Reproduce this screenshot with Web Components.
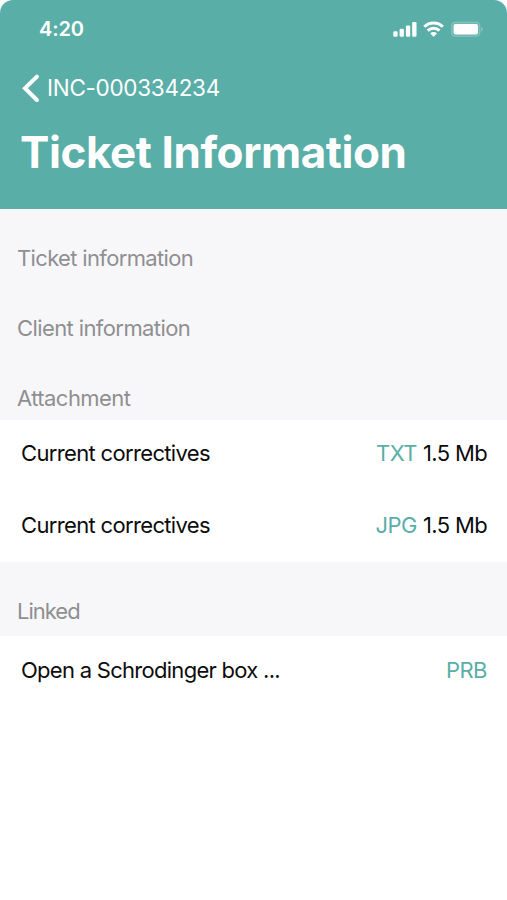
<!DOCTYPE html>
<html lang="en">
<head>
<meta charset="UTF-8">
<meta name="viewport" content="width=device-width, initial-scale=1">
<title>Ticket Information</title>
<style>
  body {
    margin: 0;
    background: #fff;
    font-family: Inter, "Liberation Sans", sans-serif;
  }
</style>
</head>
<body>
<ticket-screen>
  <ticket-header slot="header" time="4:20" back="INC-000334234" heading="Ticket Information"></ticket-header>
  <ticket-section style="--spacing: -0.65px">Ticket information</ticket-section>
  <ticket-section>Client information</ticket-section>
  <ticket-section style="--spacing: -0.55px">Attachment
    <ticket-row slot="rows" tag="TXT" size="1.5 Mb" style="--row-bottom: 5px">Current correctives</ticket-row>
    <ticket-row slot="rows" tag="JPG" size="1.5 Mb">Current correctives</ticket-row>
  </ticket-section>
  <ticket-section style="--head: 74px; --below: 10px; --spacing: -1px">Linked
    <ticket-row slot="rows" tag="PRB" style="--row-spacing: -0.72px">Open a Schrodinger box ...</ticket-row>
  </ticket-section>
</ticket-screen>

<script>
// Phone screen: header on top, sections below
class TicketScreen extends HTMLElement {
  constructor() {
    super();
    this.attachShadow({ mode: 'open' });
  }
  connectedCallback() {
    this.shadowRoot.innerHTML = `
      <style>
        :host {
          display: flex;
          flex-direction: column;
          min-height: 900px;
          background: #fff;
        }
        main { padding-top: 1px; background: #f7f7fa; }
      </style>
      <slot name="header"></slot>
      <main><slot></slot></main>
    `;
  }
}

// Signal, wifi and battery
class StatusIcons extends HTMLElement {
  constructor() {
    super();
    this.attachShadow({ mode: 'open' });
  }
  connectedCallback() {
    this.shadowRoot.innerHTML = `
      <style>
        :host { display: block; height: 18px; }
        svg { display: block; }
      </style>
      <svg width="92" height="18" viewBox="0 0 92 18" fill="#fff">
        <rect x="0.3" y="11.2" width="4.3" height="5.5" rx="1.3"/>
        <rect x="6.6" y="8.7" width="4.3" height="8" rx="1.3"/>
        <rect x="12.9" y="5.5" width="4.3" height="11.2" rx="1.3"/>
        <rect x="19.2" y="2" width="4.3" height="14.7" rx="1.3"/>
        <g fill="none" stroke="#fff" stroke-width="3">
          <path d="M31.3 6.8 a13.2 13.2 0 0 1 18.6 0"/>
          <path d="M34.7 10.7 a8.5 8.5 0 0 1 11.8 0"/>
        </g>
        <path d="M40.6 16.8 l-3.4 -3.4 a4.8 4.8 0 0 1 6.8 0 z"/>
        <rect x="58.6" y="2.1" width="28.2" height="14.2" rx="3.6" fill="#fff" fill-opacity=".12" stroke="#fff" stroke-opacity=".2" stroke-width="1.3"/>
        <path d="M88.3 6.7 q2.8 2.5 0 5 z" fill-opacity=".35"/>
        <rect x="60.6" y="4" width="24.4" height="10.4" rx="1.8"/>
      </svg>
    `;
  }
}

class TicketHeader extends HTMLElement {
  constructor() {
    super();
    this.attachShadow({ mode: 'open' });
  }
  connectedCallback() {
    this.shadowRoot.innerHTML = `
      <style>
        :host {
          display: block;
          box-sizing: border-box;
          height: 209px;
          color: #fff;
          background: #59aea7;
          border-radius: 13px 13px 0 0;
        }
        .status {
          display: flex;
          justify-content: space-between;
          padding: 17px 22px 0 39px;
          height: 24px;
          line-height: 24px;
          font-size: 20px;
          font-weight: 600;
          letter-spacing: -0.15px;
        }
        .back {
          display: flex;
          align-items: center;
          gap: 7px;
          padding: 32px 0 0 22px;
          height: 30px;
          font-size: 22.5px;
          letter-spacing: -0.3px;
        }
        .back span { margin-top: -2px; }
        h1 {
          margin: 22px 0 0 20px;
          line-height: 54px;
          font-size: 44px;
          font-weight: 700;
          letter-spacing: -0.42px;
          white-space: nowrap;
        }
        status-icons { margin-top: 3px; }
      </style>
      <div class="status">
        <span>${this.getAttribute('time')}</span>
        <status-icons></status-icons>
      </div>
      <div class="back">
        <svg width="18" height="30" viewBox="0 0 18 30" fill="none" stroke="#fff" stroke-width="4" stroke-linecap="round">
          <path d="M14.9 3.6 L3 15.3 L14.9 27"/>
        </svg>
        <span>${this.getAttribute('back')}</span>
      </div>
      <h1>${this.getAttribute('heading')}</h1>
    `;
  }
}

// Grey caption with optional white rows under it
class TicketSection extends HTMLElement {
  constructor() {
    super();
    this.attachShadow({ mode: 'open' });
  }
  connectedCallback() {
    this.shadowRoot.innerHTML = `
      <style>
        :host { display: block; }
        .caption {
          display: flex;
          align-items: flex-end;
          box-sizing: border-box;
          height: var(--head, 70px);
          padding: 0 17px var(--below, 7px);
          line-height: 30px;
          font-size: 22px;
          color: #8f8f91;
          letter-spacing: var(--spacing, -0.6px);
        }
      </style>
      <div class="caption"><slot></slot></div>
      <slot name="rows"></slot>
    `;
  }
}

class TicketRow extends HTMLElement {
  constructor() {
    super();
    this.attachShadow({ mode: 'open' });
  }
  connectedCallback() {
    this.shadowRoot.innerHTML = `
      <style>
        :host {
          display: flex;
          justify-content: space-between;
          align-items: center;
          box-sizing: border-box;
          height: 71px;
          padding: 0 20px var(--row-bottom, 4px) 21px;
          background: #fff;
          color: #0c0c0c;
          font-size: 22px;
          line-height: 30px;
          letter-spacing: var(--row-spacing, -0.66px);
          white-space: nowrap;
        }
        .meta { display: flex; gap: 6px; letter-spacing: -0.65px; }
        .tag { color: #59aea7; letter-spacing: -0.5px; }
      </style>
      <span><slot></slot></span>
      <span class="meta">
        <span class="tag">${this.getAttribute('tag')}</span>
        ${this.hasAttribute('size') ? `<span>${this.getAttribute('size')}</span>` : ''}
      </span>
    `;
  }
}

customElements.define('status-icons', StatusIcons);
customElements.define('ticket-header', TicketHeader);
customElements.define('ticket-section', TicketSection);
customElements.define('ticket-row', TicketRow);
customElements.define('ticket-screen', TicketScreen);
</script>
</body>
</html>
